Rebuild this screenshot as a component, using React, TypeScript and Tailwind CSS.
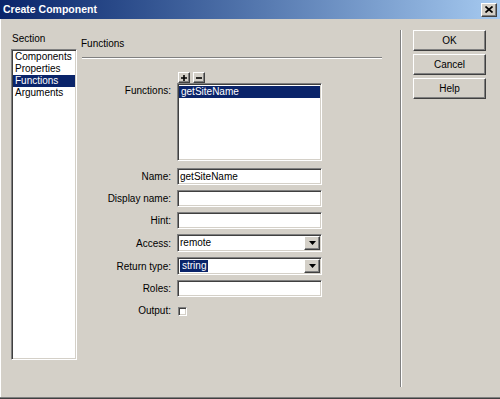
import React from 'react';

const sunken =
  'border border-t-[#808080] border-l-[#808080] border-b-white border-r-white shadow-[inset_1px_1px_0_#404040,inset_-1px_-1px_0_#d4d0c8]';
const raised =
  'border border-t-white border-l-white border-b-[#404040] border-r-[#404040] shadow-[inset_-1px_-1px_0_#808080,inset_1px_1px_0_#d4d0c8]';

function TextField({ value }: { value?: string }) {
  return (
    <div className={`${sunken} h-[17px] w-[145px] bg-white pl-[2px] leading-[15px]`}>{value}</div>
  );
}

function Select({ value, selected }: { value: string; selected?: boolean }) {
  return (
    <div className={`${sunken} h-[18px] w-[145px] bg-white flex items-stretch pl-[2px] pr-[1px] py-[1px]`}>
      <div className="flex-1 flex items-center">
        <span className={selected ? 'bg-[#0a246a] text-white px-[2px] leading-[12px]' : 'leading-[12px]'}>{value}</span>
      </div>
      <div className={`${raised} w-[16px] bg-[#d4d0c8] flex items-center justify-center`}>
        <svg width="7" height="4" viewBox="0 0 7 4">
          <polygon points="0,0 7,0 3.5,4" fill="#000" />
        </svg>
      </div>
    </div>
  );
}

function Row({ label, children }: { label: string; children: React.ReactNode }) {
  return (
    <div className="flex items-center">
      <div className="w-[91px] text-right pr-[1px]">{label}</div>
      <div className="ml-[5px]">{children}</div>
    </div>
  );
}

export default function App() {
  const sections = ['Components', 'Properties', 'Functions', 'Arguments'];

  return (
    <div className="w-[500px] h-[399px] bg-[#d4d0c8] flex flex-col overflow-hidden font-['Liberation_Sans',Arial,sans-serif] text-[10px] text-black shadow-[inset_0_-1px_0_#404040,inset_0_-2px_0_#808080,inset_1px_0_0_#ffffff]">
      {/* title bar */}
      <div className="h-[19px] shrink-0 flex items-center justify-between pl-[3px] pr-[3px] bg-linear-to-r from-[#0a246a] to-[#a6caf0]">
        <span className="text-white font-bold text-[10.5px] leading-[19px]">Create Component</span>
        <div className={`${raised} w-[16px] h-[14px] bg-[#d4d0c8] flex items-center justify-center`}>
          <svg width="8" height="7" viewBox="0 0 8 7">
            <path d="M0.5 0.5L7.5 6.5M7.5 0.5L0.5 6.5" stroke="#000" strokeWidth="1.7" />
          </svg>
        </div>
      </div>

      {/* body */}
      <div className="flex-1 flex items-start">
        {/* section list */}
        <div className="ml-[11px] mt-[14px] flex flex-col">
          <div className="leading-[12px] pl-[1px]">Section</div>
          <div className={`${sunken} mt-[4px] w-[66px] h-[311px] bg-white p-[1px]`}>
            {sections.map((s) => (
              <div
                key={s}
                className={`leading-[12px] pl-[2px] ${s === 'Functions' ? 'bg-[#0a246a] text-white' : ''}`}
              >
                {s}
              </div>
            ))}
          </div>
        </div>

        {/* form */}
        <div className="ml-[4px] mt-[19px] w-[301px] flex flex-col">
          <div className="leading-[12px]">Functions</div>
          <div className="mt-[7px] ml-[1px] h-[2px] border-t border-t-[#808080] border-b border-b-white" />

          <div className="mt-[13px] ml-[97px] flex gap-[3px]">
            <div className={`${raised} w-[12px] h-[11px] bg-[#d4d0c8] flex items-center justify-center`}>
              <svg width="6" height="6" viewBox="0 0 6 6">
                <path d="M3 0V6M0 3H6" stroke="#000" strokeWidth="1.6" />
              </svg>
            </div>
            <div className={`${raised} w-[12px] h-[11px] bg-[#d4d0c8] flex items-center justify-center`}>
              <svg width="6" height="6" viewBox="0 0 6 6">
                <path d="M0 3H6" stroke="#000" strokeWidth="1.6" />
              </svg>
            </div>
          </div>

          <div className="flex items-start">
            <div className="w-[91px] text-right pr-[1px] leading-[12px] mt-[2px]">Functions:</div>
            <div className={`${sunken} ml-[5px] w-[145px] h-[78px] bg-white p-[1px]`}>
              <div className="bg-[#0a246a] text-white leading-[12px] pl-[2px] mt-[1px]">getSiteName</div>
            </div>
          </div>

          <div className="mt-[7px] flex flex-col gap-[5px]">
            <Row label="Name:">
              <TextField value="getSiteName" />
            </Row>
            <Row label="Display name:">
              <TextField />
            </Row>
            <Row label="Hint:">
              <TextField />
            </Row>
            <Row label="Access:">
              <Select value="remote" />
            </Row>
            <Row label="Return type:">
              <Select value="string" selected />
            </Row>
            <Row label="Roles:">
              <TextField />
            </Row>
          </div>

          <div className="mt-[8px] flex items-center">
            <div className="w-[91px] text-right pr-[1px] leading-[12px]">Output:</div>
            <div className={`${sunken} ml-[6px] w-[9px] h-[9px] bg-white`} />
          </div>
        </div>

        {/* separator */}
        <div className="ml-[18px] mt-[11px] w-[2px] h-[357px] border-l border-l-[#808080] border-r border-r-white" />

        {/* buttons */}
        <div className="ml-[11px] mt-[11px] flex flex-col gap-[3px]">
          {['OK', 'Cancel', 'Help'].map((b) => (
            <div key={b} className={`${raised} w-[73px] h-[21px] bg-[#d4d0c8] flex items-center justify-center`}>
              {b}
            </div>
          ))}
        </div>
      </div>
    </div>
  );
}
